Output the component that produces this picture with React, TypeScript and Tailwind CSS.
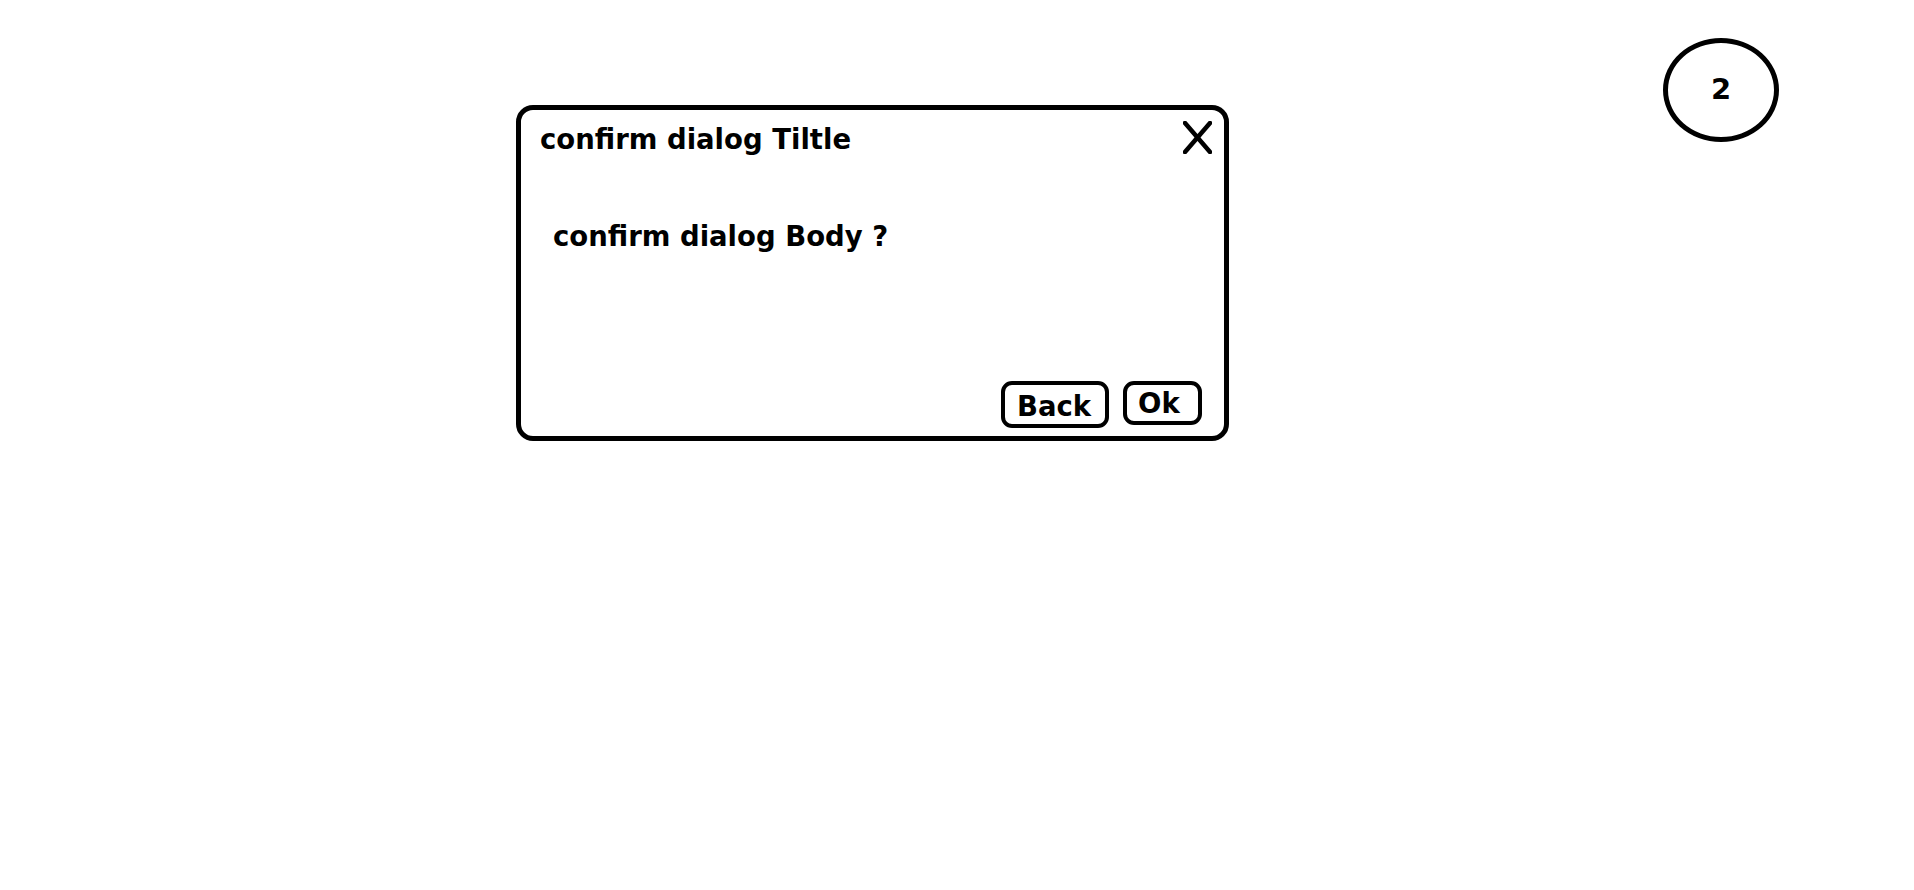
// Annotated wireframe of a confirm dialog, with a step marker on the right.
const font = "font-['DejaVu_Sans',sans-serif]";

function CloseIcon() {
    return (
        <svg width="29" height="33" viewBox="0 0 29 33" fill="none" stroke="black" strokeWidth="4.5" strokeLinecap="round">
            <path d="M2 2 L27 31" />
            <path d="M27 2 L2 31" />
        </svg>
    );
}

export default function App() {
    return (
        <div className={`flex items-start min-h-screen bg-white text-black ${font}`}>
            <div className="ml-[516px] mt-[105px] w-[713px] h-[336px] border-[5px] border-black rounded-[17px] flex flex-col">
                <div className="flex justify-between items-start">
                    <h2 className="pl-[19px] pt-[16px] text-[27.5px] leading-[27px] font-bold">
                        confirm dialog Tiltle
                    </h2>
                    <button className="mt-[11px] mr-[12px]" aria-label="close">
                        <CloseIcon />
                    </button>
                </div>

                <p className="mt-[69px] pl-[32px] text-[27.5px] leading-[27px] font-bold">
                    confirm dialog Body ?
                </p>

                <div className="mt-auto flex justify-end items-start gap-[14px] pr-[22px] pb-[8px]">
                    <button className="w-[108px] h-[47px] border-4 border-black rounded-[11px] pl-[12px] pt-[3px] text-left text-[27.5px] leading-[27px] font-bold">
                        Back
                    </button>
                    <button className="w-[79px] h-[44px] border-4 border-black rounded-[11px] pl-[11px] pt-0 text-left text-[27.5px] leading-[27px] font-bold">
                        Ok
                    </button>
                </div>
            </div>

            <div className="ml-[434px] mt-[38px] w-[116px] h-[104px] rounded-[50%] border-[5px] border-black flex items-center justify-center text-[29px] font-bold">
                2
            </div>
        </div>
    );
}
